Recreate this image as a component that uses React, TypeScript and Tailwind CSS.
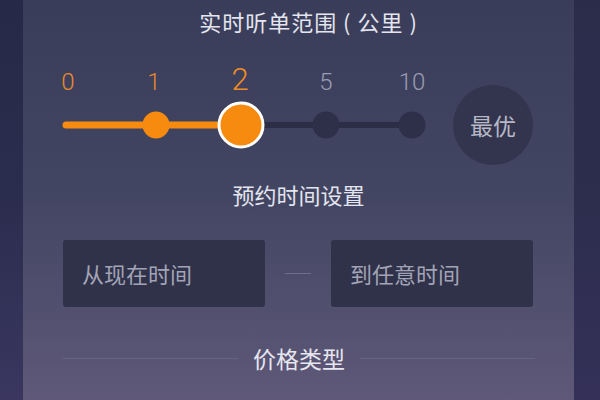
import React from 'react';

const stops = [
  { label: '0', active: true },
  { label: '1', active: true },
  { label: '2', active: true, current: true },
  { label: '5', active: false },
  { label: '10', active: false },
];

function RangeSlider() {
  return (
    <div className="flex items-end pl-[2px]">
      <div className="flex w-[430px] flex-col">
        <div className="flex h-[30px] items-baseline" style={{ fontFamily: 'Roboto, "Liberation Sans", sans-serif' }}>
          {stops.map((s) => (
            <span
              key={s.label}
              className={
                'w-[86px] text-center font-light leading-[30px] ' +
                (s.current ? 'text-[31px] text-[#f08c24]' : s.active ? 'text-[24px] text-[#e8892a]' : 'text-[24px] text-[#9a9cb2]')
              }
            >
              {s.label}
            </span>
          ))}
        </div>
        <svg className="mt-[6px]" width="430" height="48" viewBox="0 0 430 48">
          <line x1="41" y1="24" x2="215" y2="24" stroke="#f68b10" strokeWidth="7" strokeLinecap="round" />
          <line x1="215" y1="24" x2="387" y2="24" stroke="#2c2e46" strokeWidth="6" />
          <circle cx="131" cy="24" r="13.5" fill="#f68b10" />
          <circle cx="301" cy="24" r="13.5" fill="#2e3049" />
          <circle cx="387" cy="24" r="13.5" fill="#2e3049" />
          <circle cx="216" cy="24" r="22" fill="#f68b10" stroke="#ffffff" strokeWidth="3" />
        </svg>
      </div>
      <div className="mb-[-16px] ml-[-2px] flex h-[80px] w-[80px] items-center justify-center rounded-full bg-[#33354e] text-[23px] text-[#b7b8c6]">
        最优
      </div>
    </div>
  );
}

function TimeBox({ text }: { text: string }) {
  return (
    <div className="flex h-[67px] w-[202px] items-center rounded-[3px] bg-[#30324a] pl-[19px] text-[22px] text-[#a2a4b6]">
      {text}
    </div>
  );
}

export default function App() {
  return (
    <div
      className="flex h-[400px] w-[600px] overflow-hidden"
      style={{ fontFamily: '"Noto Sans CJK SC", "Noto Sans", sans-serif' }}
    >
      <div className="w-[23px] bg-gradient-to-b from-[#262947] via-[#2b2d4e] to-[#3a3660]" />
      <div className="flex flex-1 flex-col bg-gradient-to-b from-[#3a3d5a] via-[#434663] to-[#5f5879]">
        <h1 className="pt-[7px] pl-[20px] text-center text-[22px] leading-[28px] font-normal tracking-[1px] text-[#e4e5ee]">
          实时听单范围 ( 公里 )
        </h1>

        <div className="mt-[30px]">
          <RangeSlider />
        </div>

        <h2 className="mt-[31px] text-center text-[22px] leading-[28px] text-[#e4e5ee]">预约时间设置</h2>

        <div className="mt-[32px] flex items-center pl-[40px]">
          <TimeBox text="从现在时间" />
          <div className="mx-[20px] h-px w-[26px] bg-[#6d6f88]" />
          <TimeBox text="到任意时间" />
        </div>

        <div className="mt-[36px] flex items-center pl-[40px] pr-[39px]">
          <div className="h-px flex-1 bg-[#63657f]" />
          <span className="px-[15px] text-[23px] leading-[30px] text-[#e6e6ee]">价格类型</span>
          <div className="h-px flex-1 bg-[#63657f]" />
        </div>

        <div className="mt-[20px] text-center text-[22px] leading-[30px] text-[#f08c24]">一口价</div>
      </div>
      <div className="w-[26px] bg-gradient-to-b from-[#2a2c4a] via-[#2d2e4e] to-[#343058]" />
    </div>
  );
}
